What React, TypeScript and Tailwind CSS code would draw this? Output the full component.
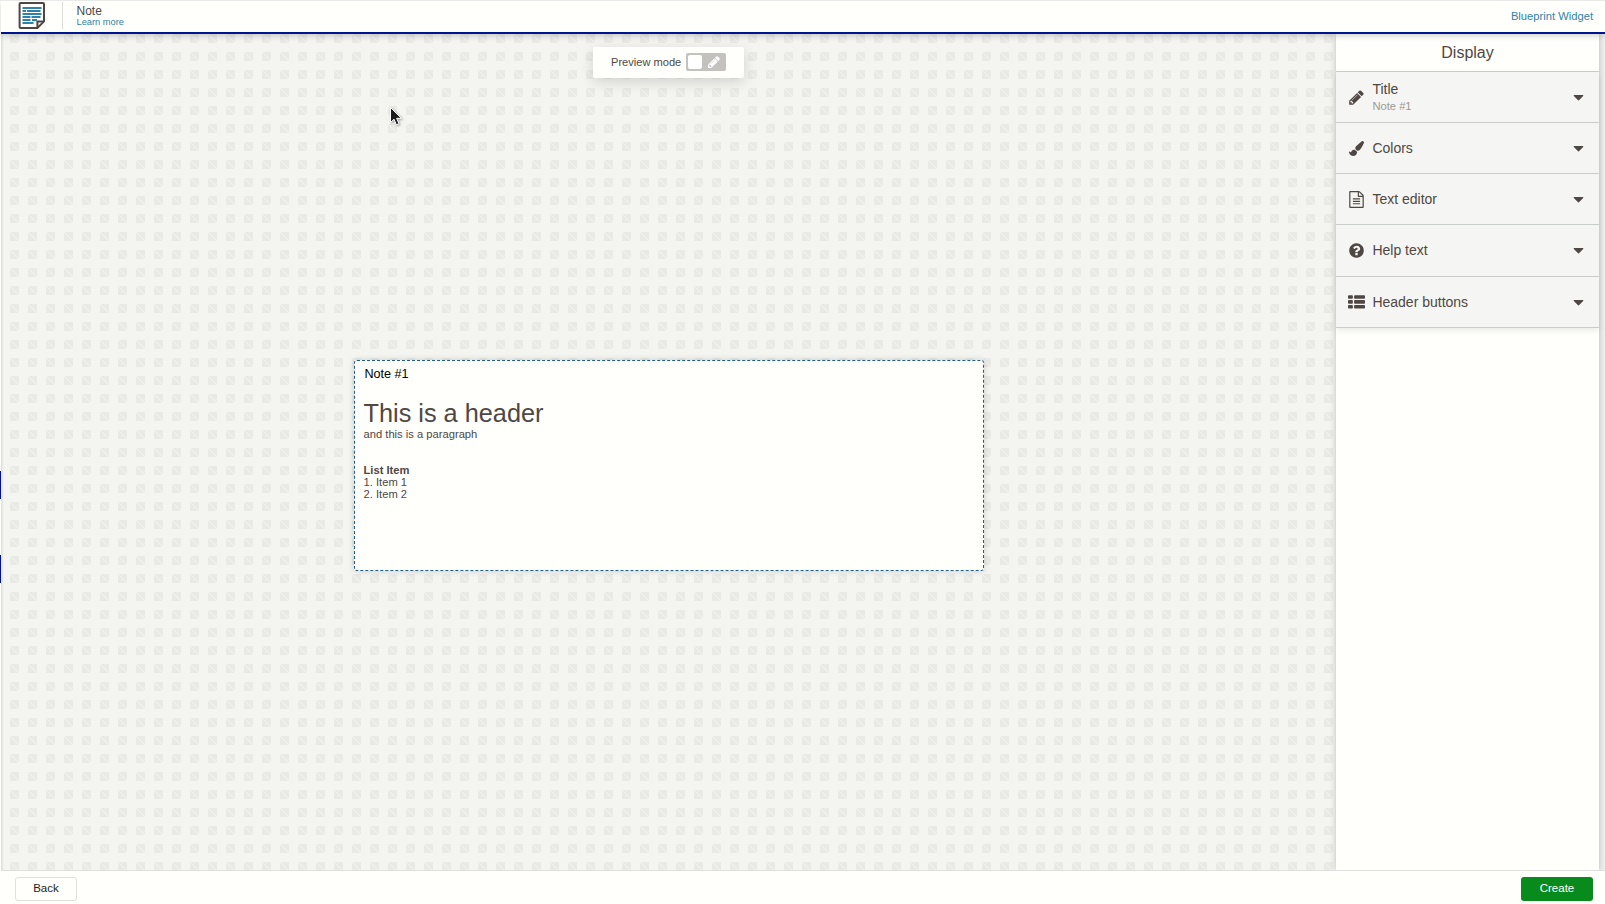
import React from "react";

const PENCIL =
  "M491 1536l91-91-235-235-91 91v107h128v128h107zm523-928q0-22-22-22-10 0-17 7l-542 542q-7 7-7 17 0 22 22 22 10 0 17-7l542-542q7-7 7-17zm-54-192l416 416-832 832h-416v-416zm683 96q0 53-37 90l-166 166-416-416 166-165q36-38 90-38 53 0 91 38l235 234q37 39 37 91z";
const BRUSH =
  "M1615 0q70 0 122.5 46.5t52.5 116.5q0 63-45 151-332 629-465 752-97 91-218 91-126 0-216.5-92.5t-90.5-219.5q0-128 92-212l638-579q59-54 130-54zm-909 1034q39 76 106.5 130t150.5 76l1 71q4 213-129.5 347t-348.5 134q-123 0-218-46.5t-152.5-127.5-86.5-183-29-220q7 5 41 30t62 44.5 59 36.5 46 17q41 0 55-37 25-66 57.5-112.5t69.5-76 88-47.5 103-25.5 125-10.5z";
const FILE =
  "M1596 380q28 28 48 76t20 88v1152q0 40-28 68t-68 28h-1344q-40 0-68-28t-28-68v-1600q0-40 28-68t68-28h896q40 0 88 20t76 48zm-444-244v376h376q-10-29-22-41l-313-313q-12-12-41-22zm384 1528v-1024h-416q-40 0-68-28t-28-68v-416h-768v1536h1280zm-1024-864q0-14 9-23t23-9h704q14 0 23 9t9 23v64q0 14-9 23t-23 9h-704q-14 0-23-9t-9-23v-64zm736 224q14 0 23 9t9 23v64q0 14-9 23t-23 9h-704q-14 0-23-9t-9-23v-64q0-14 9-23t23-9h704zm0 256q14 0 23 9t9 23v64q0 14-9 23t-23 9h-704q-14 0-23-9t-9-23v-64q0-14 9-23t23-9h704z";
const HELP =
  "M1024 1376v-192q0-14-9-23t-23-9h-192q-14 0-23 9t-9 23v192q0 14 9 23t23 9h192q14 0 23-9t9-23zm256-672q0-88-55.5-163t-138.5-116-170-41q-243 0-371 213-15 24 8 42l132 100q7 6 19 6 16 0 25-12 53-68 86-92 34-24 86-24 48 0 85.5 26t37.5 59q0 38-20 61t-68 45q-63 28-115.5 86.5t-52.5 125.5v36q0 14 9 23t23 9h192q14 0 23-9t9-23q0-19 21.5-49.5t54.5-49.5q32-18 49-28.5t46-35 44.5-48 28-60.5 12.5-81zm384 192q0 209-103 385.5t-279.5 279.5-385.5 103-385.5-103-279.5-279.5-103-385.5 103-385.5 279.5-279.5 385.5-103 385.5 103 279.5 279.5 103 385.5z";
const LIST =
  "M512 1248v192q0 40-28 68t-68 28H96q-40 0-68-28t-28-68v-192q0-40 28-68t68-28h320q40 0 68 28t28 68zm0-512v192q0 40-28 68t-68 28H96q-40 0-68-28t-28-68V736q0-40 28-68t68-28h320q40 0 68 28t28 68zm1280 512v192q0 40-28 68t-68 28H736q-40 0-68-28t-28-68v-192q0-40 28-68t68-28h960q40 0 68 28t28 68zM512 224v192q0 40-28 68t-68 28H96q-40 0-68-28t-28-68V224q0-40 28-68t68-28h320q40 0 68 28t28 68zm1280 512v192q0 40-28 68t-68 28H736q-40 0-68-28t-28-68V736q0-40 28-68t68-28h960q40 0 68 28t28 68zm0-512v192q0 40-28 68t-68 28H736q-40 0-68-28t-28-68V224q0-40 28-68t68-28h960q40 0 68 28t28 68z";
const CARET =
  "M1408 704q0 26-19 45l-448 448q-19 19-45 19t-45-19l-448-448q-19-19-19-45t19-45 45-19h896q26 0 45 19t19 45z";

function Icon({ path, className }: { path: string; className: string }) {
  return (
    <svg viewBox="0 0 1792 1792" fill="currentColor" className={`shrink-0 ${className}`}>
      <path d={path} />
    </svg>
  );
}

function NoteLogo() {
  return (
    <svg width="28" height="28" viewBox="0 0 28 28" fill="none">
      <path d="M2.6 1h22.4q1 0 1 1v17.4l-6.6 6.6H2.6q-1 0-1-1V2q0-1 1-1z" stroke="#4f4744" strokeWidth="2" fill="#fff" />
      <path d="M19.4 26v-6.4h6.6" stroke="#4f4744" strokeWidth="2" />
      <path
        d="M4.5 6h19M4.5 9h3.5M9 9h13.5M4.5 12h19M4.5 15h8M13.5 15h9M4.5 18h8M14 18h5M4.5 21h11"
        stroke="#2f81a8"
        strokeWidth="2"
      />
    </svg>
  );
}

const rows = [
  { label: "Title", sub: "Note #1", path: PENCIL, h: "h-[51px]", icon: "size-[17px]" },
  { label: "Colors", path: BRUSH, h: "h-[51px]", icon: "size-[15px]" },
  { label: "Text editor", path: FILE, h: "h-[51px]", icon: "size-[17px]" },
  { label: "Help text", path: HELP, h: "h-[52px]", icon: "size-[17px]" },
  { label: "Header buttons", path: LIST, h: "h-[51px]", icon: "size-[17px]" },
];

export default function App() {
  return (
    <div className="relative flex h-[904px] w-[1605px] flex-col overflow-hidden border-t border-[#e9e9e7] bg-[#fffffc] pl-px font-['Liberation_Sans',sans-serif] text-[#4f4744]">
      <header className="relative z-20 flex h-[33px] shrink-0 items-start border-b-2 border-[#00148f] bg-[#fffffc] shadow-[0_2px_6px_rgba(0,0,0,0.18)]">
        <div className="ml-[17px] pt-px">
          <NoteLogo />
        </div>
        <div className="ml-[16px] mt-px h-[27px] w-px bg-[#dcdddb]" />
        <div className="ml-[13px] mt-[4px] flex flex-col pl-[0.5px]">
          <span className="text-[12px] leading-[13px]">Note</span>
          <a className="text-[9.3px] leading-[9px] text-[#3183a8]">Learn more</a>
        </div>
        <a className="ml-auto mr-[12px] mt-[8px] text-[11.2px] leading-[14px] text-[#3183a8]">Blueprint Widget</a>
      </header>

      <main className="flex min-h-0 flex-1">
        <section className="relative flex-1 bg-[#f4f4f1]">
          <svg className="absolute inset-0 size-full">
            <defs>
              <pattern id="tiles" x="9" y="0" width="18" height="18" patternUnits="userSpaceOnUse">
                <rect width="9" height="9" fill="#e9e9e6" />
                <path d="M0 0L9 9" stroke="#f5f5f2" strokeWidth="0.9" />
              </pattern>
            </defs>
            <rect width="100%" height="100%" fill="url(#tiles)" />
          </svg>
          <div className="relative flex flex-col items-center">
            <div className="mt-[13px] flex h-[31px] w-[151px] items-center rounded-[2px] bg-[#fffffc] pl-[18px] shadow-[0_4px_14px_rgba(0,0,0,0.14)]">
              <span className="w-[75px] whitespace-nowrap pb-px text-[11.1px]">Preview mode</span>
              <div className="mb-px flex h-[18px] w-[40px] items-center rounded-[2px] bg-[#c4c2bf] pl-[2px] text-white">
                <div className="size-[14px] rounded-[2px] bg-white" />
                <Icon path={PENCIL} className="ml-[5px] size-[14px]" />
              </div>
            </div>
            <article className="mt-[282px] h-[211px] w-[630px] rounded-[3px] border border-dashed border-[#1d5f8c] bg-[#fffffc] px-[9px] shadow-[0_0_6px_rgba(0,0,0,0.16)]">
              <div className="mt-[6px] pl-px text-[12.6px] leading-[15px] text-black">Note #1</div>
              <h1 className="mt-[16px] text-[25.3px] leading-[30px]">This is a header</h1>
              <p className="text-[11.2px] leading-[12px]">and this is a paragraph</p>
              <div className="mt-[24px] text-[11.2px] leading-[12px]">
                <b>List Item</b>
                <div>1. Item 1</div>
                <div>2. Item 2</div>
              </div>
            </article>
          </div>
          <svg className="absolute left-[388px] top-[72px] drop-shadow-[1px_1px_1px_rgba(0,0,0,0.35)]" width="14" height="22" viewBox="0 0 14 22">
            <path d="M1.5 1.5v15l3.5-3.3 2.4 5.6 2.6-1.1-2.4-5.4h4.8z" fill="#1c1c1c" stroke="#fff" strokeWidth="1" />
          </svg>
          <div className="absolute inset-y-0 left-0 w-[3px] bg-gradient-to-r from-black/10 to-transparent" />
        </section>
        <aside className="z-10 w-[263px] shrink-0 bg-[#fffffc] shadow-[0_0_6px_rgba(0,0,0,0.24)]">
          <h2 className="flex h-[38px] items-center justify-center border-b border-[#cbcdca] text-[16px]">Display</h2>
          <div className="shadow-[0_3px_6px_rgba(0,0,0,0.08)]">
            {rows.map((r) => (
              <div key={r.label} className={`flex items-center border-b border-[#cbcdca] bg-[#f5f6f3] pl-[12px] pr-[12px] ${r.h}`}>
                <span className="flex w-[17px] justify-center">
                  <Icon path={r.path} className={r.icon} />
                </span>
                <span className="ml-[7.4px] flex flex-1 flex-col">
                  <span className="text-[14px] leading-[17px]">{r.label}</span>
                  {r.sub && <span className="text-[11.2px] leading-[16px] text-[#9b9896]">{r.sub}</span>}
                </span>
                <Icon path={CARET} className="size-[17px]" />
              </div>
            ))}
          </div>
        </aside>
        <div className="w-[6px] shrink-0 bg-[#efefed]" />
      </main>

      <footer className="relative z-20 flex h-[34px] shrink-0 items-center justify-between border-t border-[#dfe0dd] bg-[#fffffc] pb-[3px] pl-[14px] pr-[12px] pt-[6px] text-[11.5px]">
        <button className="h-[24px] w-[62px] rounded-[3px] border border-[#dfe0dd] text-[#222]">Back</button>
        <button className="h-[24px] w-[72px] rounded-[3px] bg-[#088a1c] text-white">Create</button>
      </footer>

      <div className="absolute left-0 top-[470px] h-[28px] w-px bg-[#00148f]" />
      <div className="absolute left-0 top-[554px] h-[28px] w-px bg-[#00148f]" />
    </div>
  );
}
